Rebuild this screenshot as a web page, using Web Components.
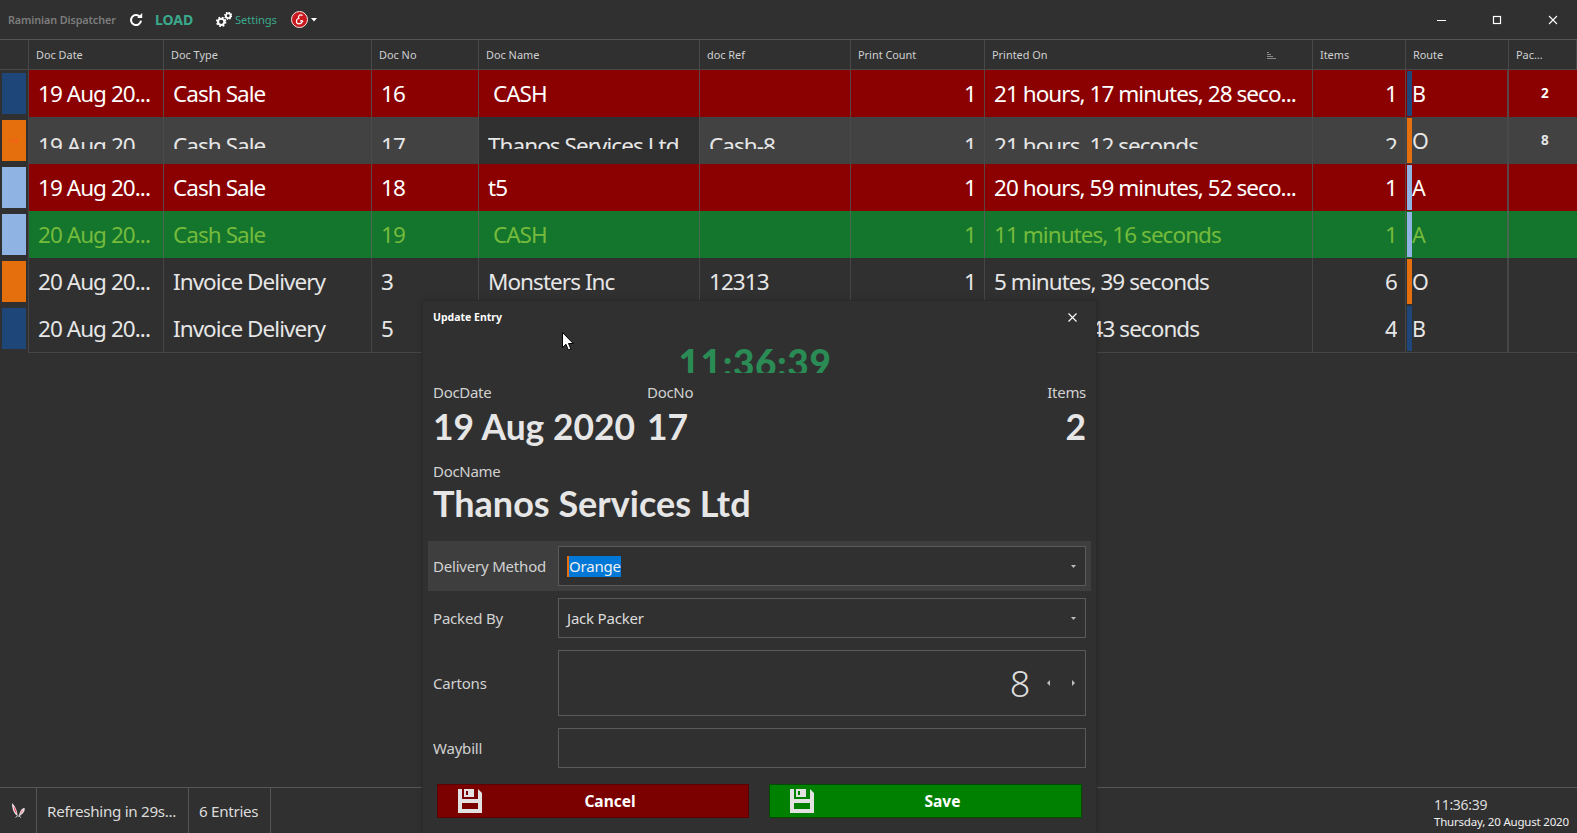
<!DOCTYPE html>
<html>
<head>
<meta charset="utf-8">
<title>Raminian Dispatcher</title>
<style>
  html, body { margin: 0; height: 100%; background: #303030; overflow: hidden; }
  body { font-family: "Noto Sans", "Liberation Sans", sans-serif; color: #e0e0e0; }
</style>
</head>
<body>
<rd-app>
  <rd-toolbar></rd-toolbar>
  <rd-grid>
    <rd-row kind="head">
      <rd-head></rd-head><rd-head>Doc Date</rd-head><rd-head>Doc Type</rd-head><rd-head>Doc No</rd-head><rd-head>Doc Name</rd-head><rd-head>doc Ref</rd-head><rd-head>Print Count</rd-head><rd-head sorted>Printed On</rd-head><rd-head>Items</rd-head><rd-head>Route</rd-head><rd-head>Pac...</rd-head>
    </rd-row>
    <rd-row kind="red">
      <rd-swatch color="#1f4678"></rd-swatch><rd-cell>19 Aug 20...</rd-cell><rd-cell>Cash Sale</rd-cell><rd-cell>16</rd-cell><rd-cell> CASH</rd-cell><rd-cell></rd-cell><rd-cell right>1</rd-cell><rd-cell>21 hours, 17 minutes, 28 seco...</rd-cell><rd-cell right>1</rd-cell><rd-route color="#1f4678">B</rd-route><rd-pack>2</rd-pack>
    </rd-row>
    <rd-row kind="current">
      <rd-swatch color="#e56f0c" arrow></rd-swatch><rd-cell clip>19 Aug 20...</rd-cell><rd-cell clip>Cash Sale</rd-cell><rd-cell clip>17</rd-cell><rd-cell clip focus>Thanos Services Ltd</rd-cell><rd-cell clip>Cash-8</rd-cell><rd-cell clip right>1</rd-cell><rd-cell clip>21 hours, 12 seconds</rd-cell><rd-cell clip right>2</rd-cell><rd-route color="#e56f0c">O</rd-route><rd-pack>8</rd-pack>
    </rd-row>
    <rd-row kind="red">
      <rd-swatch color="#8fb4e3"></rd-swatch><rd-cell>19 Aug 20...</rd-cell><rd-cell>Cash Sale</rd-cell><rd-cell>18</rd-cell><rd-cell>t5</rd-cell><rd-cell></rd-cell><rd-cell right>1</rd-cell><rd-cell>20 hours, 59 minutes, 52 seco...</rd-cell><rd-cell right>1</rd-cell><rd-route color="#8fb4e3">A</rd-route><rd-pack></rd-pack>
    </rd-row>
    <rd-row kind="green">
      <rd-swatch color="#8fb4e3"></rd-swatch><rd-cell>20 Aug 20...</rd-cell><rd-cell>Cash Sale</rd-cell><rd-cell>19</rd-cell><rd-cell> CASH</rd-cell><rd-cell></rd-cell><rd-cell right>1</rd-cell><rd-cell>11 minutes, 16 seconds</rd-cell><rd-cell right>1</rd-cell><rd-route color="#8fb4e3">A</rd-route><rd-pack></rd-pack>
    </rd-row>
    <rd-row>
      <rd-swatch color="#e56f0c"></rd-swatch><rd-cell>20 Aug 20...</rd-cell><rd-cell>Invoice Delivery</rd-cell><rd-cell>3</rd-cell><rd-cell>Monsters Inc</rd-cell><rd-cell>12313</rd-cell><rd-cell right>1</rd-cell><rd-cell>5 minutes, 39 seconds</rd-cell><rd-cell right>6</rd-cell><rd-route color="#e56f0c">O</rd-route><rd-pack></rd-pack>
    </rd-row>
    <rd-row>
      <rd-swatch color="#1f4678"></rd-swatch><rd-cell>20 Aug 20...</rd-cell><rd-cell>Invoice Delivery</rd-cell><rd-cell>5</rd-cell><rd-cell></rd-cell><rd-cell></rd-cell><rd-cell right></rd-cell><rd-cell>1 minute, 43 seconds</rd-cell><rd-cell right>4</rd-cell><rd-route color="#1f4678">B</rd-route><rd-pack></rd-pack>
    </rd-row>
  </rd-grid>
  <rd-statusbar></rd-statusbar>
  <rd-dialog heading="Update Entry" clock="11:36:39">
    <rd-info label="DocDate" value="19 Aug 2020" slot="date"></rd-info>
    <rd-info label="DocNo" value="17" slot="no"></rd-info>
    <rd-info label="Items" value="2" right slot="items"></rd-info>
    <rd-info label="DocName" value="Thanos Services Ltd" wide slot="name"></rd-info>
    <rd-field label="Delivery Method" active><rd-combo selected>Orange</rd-combo></rd-field>
    <rd-field label="Packed By"><rd-combo>Jack Packer</rd-combo></rd-field>
    <rd-field label="Cartons"><rd-spin>8</rd-spin></rd-field>
    <rd-field label="Waybill"><rd-text></rd-text></rd-field>
    <rd-button color="#7b0000" edge="#5c0000" slot="actions">Cancel</rd-button>
    <rd-button color="#008000" edge="#004d00" slot="actions">Save</rd-button>
  </rd-dialog>
  <rd-cursor></rd-cursor>
</rd-app>

<script>
const UI_FONT = '"Noto Sans", "Liberation Sans", sans-serif';
const CELL_FONT_SIZE = '22.5px';
const CELL_SPACING = '-0.95px';

class RdApp extends HTMLElement {
  constructor() {
    super();
    this.attachShadow({ mode: 'open' });
  }
  connectedCallback() {
    this.shadowRoot.innerHTML = `
      <style>
        :host {
          display: flex;
          flex-direction: column;
          position: relative;
          height: 833px;
          overflow: hidden;
          background: #303030;
          font-family: ${UI_FONT};
        }
      </style>
      <slot></slot>
    `;
  }
}

class RdToolbar extends HTMLElement {
  constructor() {
    super();
    this.attachShadow({ mode: 'open' });
  }
  connectedCallback() {
    this.shadowRoot.innerHTML = `
      <style>
        :host {
          display: flex;
          align-items: center;
          flex: none;
          height: 39px;
          border-bottom: 1px solid #555;
          box-sizing: content-box;
          padding-left: 8px;
        }
        .title { width: 121px; font-size: 10.8px; font-weight: 600; color: #7d7d7d; white-space: nowrap; letter-spacing: -.1px; }
        .refresh { width: 14px; height: 14px; margin-right: 12px; }
        .load { width: 61px; font-size: 14px; font-weight: 700; color: #3aa98c; }
        .gears { width: 16px; height: 15px; margin-right: 3px; }
        .settings { width: 56px; font-size: 11.2px; color: #3aa98c; letter-spacing: -.1px; }
        .logo { width: 17px; height: 17px; margin-right: 3px; }
        .caret { width: 6px; height: 4px; }
        .win { margin-left: auto; display: flex; }
        .win svg { width: 56px; height: 12px; display: block; }
      </style>
      <span class="title">Raminian Dispatcher</span>
      <svg class="refresh" viewBox="0 0 14 14" fill="none">
        <path d="M11.2 4.3A5 5 0 1 0 12 7.6" stroke="#fff" stroke-width="2"/>
        <path d="M8.2 4.9h5V0z" fill="#fff"/>
      </svg>
      <span class="load">LOAD</span>
      <svg class="gears" viewBox="0 0 17 16">
        <circle cx="5.5" cy="10.5" r="3.4" fill="none" stroke="#fff" stroke-width="2.2"/>
        <circle cx="5.5" cy="10.5" r="4.8" fill="none" stroke="#fff" stroke-width="1.6" stroke-dasharray="1.9 1.9"/>
        <circle cx="13" cy="4" r="2.5" fill="none" stroke="#fff" stroke-width="1.9"/>
        <circle cx="13" cy="4" r="3.7" fill="none" stroke="#fff" stroke-width="1.4" stroke-dasharray="1.5 1.4"/>
      </svg>
      <span class="settings">Settings</span>
      <svg class="logo" viewBox="0 0 17 17">
        <circle cx="8.5" cy="8.5" r="8" fill="#c9181e" stroke="#f4e8e8" stroke-width="1"/>
        <path d="M11.5 4.5C9.500 2.800 6.500 4.800 7.800 7.500 5 7.800 4.300 12.800 8 12.800c1.800 0 3-1 3.700-2.500-.4-1-1.700-1-2.400 0" fill="none" stroke="#fff" stroke-width="1.2"/>
      </svg>
      <svg class="caret" viewBox="0 0 6 4"><path d="M0 0h6L3 3.5z" fill="#fff"/></svg>
      <div class="win">
        <svg viewBox="0 0 56 12"><path d="M28 6.500h9" stroke="#fff" fill="none"/></svg>
        <svg viewBox="0 0 56 12"><rect x="28.500" y="2.500" width="7" height="7" stroke="#fff" fill="none" stroke-width="1.2"/></svg>
        <svg viewBox="0 0 56 12"><path d="M28 2l8 8M36 2l-8 8" stroke="#fff" fill="none" stroke-width="1.1"/></svg>
      </div>
    `;
  }
}

class RdGrid extends HTMLElement {
  constructor() {
    super();
    this.attachShadow({ mode: 'open' });
  }
  connectedCallback() {
    this.shadowRoot.innerHTML = `
      <style>
        :host {
          display: flex;
          flex-direction: column;
          flex: 1;
          min-height: 0;
          --cols: 29px 135px 208px 107px 221px 151px 134px 328px 93px 103px 68px;
        }
      </style>
      <slot></slot>
    `;
  }
}

class RdRow extends HTMLElement {
  constructor() {
    super();
    this.attachShadow({ mode: 'open' });
  }
  connectedCallback() {
    this.shadowRoot.innerHTML = `
      <style>
        :host {
          display: grid;
          grid-template-columns: var(--cols);
          height: 47px;
          color: #e6e6e6;
          background: #303030;
          --line: #464646;
        }
        :host([kind="head"]) { height: 30px; --line: #484848; }
        :host([kind="red"]) { background: #8b0000; color: #fff; --line: #5a4444; }
        :host([kind="green"]) { background: #14752d; color: #74bb3c; --line: #4b6650; }
        :host([kind="current"]) { background: #424242; color: #e6e6e6; --line: #4a4a4a; }
      </style>
      <slot></slot>
    `;
  }
}

class RdHead extends HTMLElement {
  constructor() {
    super();
    this.attachShadow({ mode: 'open' });
  }
  connectedCallback() {
    const sort = this.hasAttribute('sorted')
      ? `<svg viewBox="0 0 9 7"><path d="M0 .5h2M0 2.500h4M0 4.500h6M0 6.500h9" stroke="#8a8a8a"/></svg>`
      : '';
    this.shadowRoot.innerHTML = `
      <style>
        :host {
          display: flex;
          align-items: center;
          position: relative;
          box-sizing: border-box;
          padding-left: 7px;
          font-size: 10.9px;
          color: #d0d0d0;
          border-right: 1px solid var(--line);
          border-bottom: 1px solid var(--line);
          white-space: nowrap;
        }
        svg { position: absolute; left: 282px; top: 12px; width: 9px; height: 7px; }
      </style>
      <slot></slot>${sort}
    `;
  }
}

class RdCell extends HTMLElement {
  constructor() {
    super();
    this.attachShadow({ mode: 'open' });
  }
  connectedCallback() {
    this.shadowRoot.innerHTML = `
      <style>
        :host {
          display: block;
          box-sizing: border-box;
          min-width: 0;
          padding: 0 8px 0 9px;
          border-right: 1px solid var(--line);
          border-bottom: 1px solid var(--line);
          font-size: ${CELL_FONT_SIZE};
          letter-spacing: ${CELL_SPACING};
          line-height: 48px;
          overflow: hidden;
        }
        :host([right]) { text-align: right; }
        :host([focus]) { background: #303030; }
        /* the row is mid-repaint in the reference: text sits low and is cut */
        :host([clip]) .text { height: 32px; line-height: 58px; }
        .text { display: block; overflow: hidden; white-space: pre; }
      </style>
      <span class="text"><slot></slot></span>
    `;
  }
}

class RdSwatch extends HTMLElement {
  constructor() {
    super();
    this.attachShadow({ mode: 'open' });
  }
  connectedCallback() {
    const arrow = this.hasAttribute('arrow')
      ? `<svg viewBox="0 0 10 8"><path d="M0 4h9M6 1l3 3-3 3" fill="none" stroke="#ff5a1e"/></svg>`
      : '';
    this.shadowRoot.innerHTML = `
      <style>
        :host {
          display: flex;
          align-items: center;
          justify-content: center;
          box-sizing: border-box;
          background: #303030;
          border-right: 1px solid #464646;
          padding: 3px 2px 4px 2px;
        }
        div { width: 100%; height: 100%; display: flex; align-items: center; justify-content: center; background: ${this.getAttribute('color')}; }
        svg { width: 10px; height: 8px; }
      </style>
      <div>${arrow}</div>
    `;
  }
}

class RdRoute extends HTMLElement {
  constructor() {
    super();
    this.attachShadow({ mode: 'open' });
  }
  connectedCallback() {
    this.shadowRoot.innerHTML = `
      <style>
        :host {
          display: flex;
          box-sizing: border-box;
          border-right: 2px solid var(--line);
          border-bottom: 1px solid var(--line);
          padding: 1px 0 1px 1px;
          font-size: 21.5px;
          line-height: 45px;
        }
        i { display: block; width: 5px; background: ${this.getAttribute('color')}; }
      </style>
      <i></i><slot></slot>
    `;
  }
}

class RdPack extends HTMLElement {
  constructor() {
    super();
    this.attachShadow({ mode: 'open' });
  }
  connectedCallback() {
    this.shadowRoot.innerHTML = `
      <style>
        :host {
          display: block;
          box-sizing: border-box;
          border-bottom: 1px solid var(--line);
          padding-left: 32px;
          font-size: 13.5px;
          font-weight: 700;
          line-height: 47px;
        }
      </style>
      <slot></slot>
    `;
  }
}

class RdStatusbar extends HTMLElement {
  constructor() {
    super();
    this.attachShadow({ mode: 'open' });
  }
  connectedCallback() {
    this.shadowRoot.innerHTML = `
      <style>
        :host {
          display: flex;
          flex: none;
          height: 45px;
          border-top: 1px solid #555;
          font-size: 15.2px;
          color: #dcdcdc;
          letter-spacing: -.3px;
        }
        .cell { display: flex; align-items: center; box-sizing: border-box; border-right: 1px solid #555; white-space: nowrap; }
        .bunny { width: 37px; justify-content: center; }
        .bunny svg { width: 16px; height: 17px; }
        .refresh { width: 152px; padding-left: 10px; }
        .entries { width: 82px; padding-left: 10px; }
        .clock { margin-left: auto; width: 143px; display: flex; flex-direction: column; padding-top: 9px; }
        .time { font-size: 14px; line-height: 16px; }
        .date { font-size: 11.5px; line-height: 17px; letter-spacing: -.2px; white-space: nowrap; color: #f0f0f0; }
      </style>
      <div class="cell bunny">
        <svg viewBox="0 0 16 17" fill="none">
          <path d="M2 1c3 3 5.500 8 5.500 13-3.500-2-5.500-7-5.500-13z" fill="#f3e9ea"/>
          <path d="M3.500 4c1.500 2.300 2.800 5 3.200 8-1.800-2-3-5-3.200-8z" fill="#e8405f"/>
          <path d="M14.500 6c1 3-2 6.500-5.500 8.200.3-3.400 2-7.800 5.500-8.200z" fill="#f3e9ea"/>
          <path d="M13.300 7.500c.4 2-1.500 4.200-3.400 5.300.4-2.200 1.600-4.600 3.400-5.300z" fill="#e79aa8"/>
          <path d="M5.500 15.500l2-1.500 1.500 0 2 1.500" stroke="#c9c9c9" stroke-width="1"/>
        </svg>
      </div>
      <div class="cell refresh">Refreshing in 29s...</div>
      <div class="cell entries">6 Entries</div>
      <div class="clock">
        <span class="time">11:36:39</span>
        <span class="date">Thursday, 20 August 2020</span>
      </div>
    `;
  }
}

class RdDialog extends HTMLElement {
  constructor() {
    super();
    this.attachShadow({ mode: 'open' });
  }
  connectedCallback() {
    this.shadowRoot.innerHTML = `
      <style>
        :host {
          display: flex;
          flex-direction: column;
          position: absolute;
          left: 423px;
          top: 301px;
          width: 673px;
          height: 532px;
          box-sizing: border-box;
          padding: 0 10px;
          background: #303030;
          box-shadow: 0 0 0 1px #2a2a2a, 0 0 6px rgba(0, 0, 0, .25);
        }
        .title { display: flex; align-items: center; justify-content: space-between; height: 32px; flex: none; font-size: 10.5px; font-weight: 700; color: #fff; }
        .title svg { width: 9px; height: 9px; margin-right: 9px; }
        .clock { height: 40px; flex: none; overflow: hidden; text-align: center; padding-right: 9px; box-sizing: border-box; font-family: Lato, "Liberation Sans", sans-serif; font-size: 37px; font-weight: 900; line-height: 60px; letter-spacing: .6px; color: #2a8b55; }
        .info { display: grid; grid-template-columns: 214px 1fr auto; margin-top: 9px; flex: none; }
        .name { margin-top: 14px; }
        .form { display: flex; flex-direction: column; gap: 2px; margin: 18px -5px 0; flex: none; }
        .actions { display: grid; grid-template-columns: 312px 313px; gap: 20px; margin: 11px 0 0 4px; flex: none; }
      </style>
      <div class="title">
        <span>${this.getAttribute('heading')}</span>
        <svg viewBox="0 0 9 9"><path d="M.5.500l8 8M8.500.500l-8 8" stroke="#fff" fill="none" stroke-width="1.1"/></svg>
      </div>
      <div class="clock">${this.getAttribute('clock')}</div>
      <div class="info">
        <slot name="date"></slot><slot name="no"></slot><slot name="items"></slot>
      </div>
      <div class="name"><slot name="name"></slot></div>
      <div class="form"><slot></slot></div>
      <div class="actions"><slot name="actions"></slot></div>
    `;
  }
}

class RdInfo extends HTMLElement {
  constructor() {
    super();
    this.attachShadow({ mode: 'open' });
  }
  connectedCallback() {
    this.shadowRoot.innerHTML = `
      <style>
        :host { display: block; }
        :host([right]) { text-align: right; }
        .label { display: block; font-size: 15px; line-height: 20px; letter-spacing: -.3px; color: #d2d2d2; }
        .value { display: block; margin-top: 5px; font-family: Lato, "Liberation Sans", sans-serif; font-size: 35.4px; font-weight: 700; line-height: 40px; color: #e6e6e6; white-space: nowrap; }
        :host([wide]) .value { font-size: 36px; margin-top: 2px; }
      </style>
      <span class="label">${this.getAttribute('label')}</span>
      <span class="value">${this.getAttribute('value')}</span>
    `;
  }
}

class RdField extends HTMLElement {
  constructor() {
    super();
    this.attachShadow({ mode: 'open' });
  }
  connectedCallback() {
    this.shadowRoot.innerHTML = `
      <style>
        :host {
          display: grid;
          grid-template-columns: 125px 1fr;
          align-items: center;
          padding: 5px;
          font-size: 15px;
          letter-spacing: -.2px;
          color: #d2d2d2;
        }
        :host([active]) { background: #3e3e3e; }
      </style>
      <span>${this.getAttribute('label')}</span>
      <slot></slot>
    `;
  }
}

const boxStyle = `
  display: flex;
  align-items: center;
  box-sizing: border-box;
  height: 40px;
  padding: 0 9px 0 8px;
  background: #303030;
  border: 1px solid #5a5a5a;
  color: #dcdcdc;
`;

class RdCombo extends HTMLElement {
  constructor() {
    super();
    this.attachShadow({ mode: 'open' });
  }
  connectedCallback() {
    this.shadowRoot.innerHTML = `
      <style>
        :host { ${boxStyle} justify-content: space-between; }
        .sel { display: flex; line-height: 21px; }
        :host([selected]) .sel { background: #0078d7; color: #f0f0f0; border-left: 2px solid #e56f0c; }
        svg { width: 5px; height: 3px; }
      </style>
      <span class="sel"><slot></slot></span>
      <svg viewBox="0 0 5 3"><path d="M0 0h5L2.5 3z" fill="#bdbdbd"/></svg>
    `;
  }
}

class RdSpin extends HTMLElement {
  constructor() {
    super();
    this.attachShadow({ mode: 'open' });
  }
  connectedCallback() {
    this.shadowRoot.innerHTML = `
      <style>
        :host { ${boxStyle} height: 66px; justify-content: flex-end; font-size: 36px; font-weight: 300; }
        svg { width: 3px; height: 6px; }
        .down { margin-left: 17px; }
        .up { margin: 0 1px 0 22px; }
      </style>
      <slot></slot>
      <svg class="down" viewBox="0 0 3 6"><path d="M3 0v6L0 3z" fill="#bdbdbd"/></svg>
      <svg class="up" viewBox="0 0 3 6"><path d="M0 0v6l3-3z" fill="#bdbdbd"/></svg>
    `;
  }
}

class RdText extends HTMLElement {
  constructor() {
    super();
    this.attachShadow({ mode: 'open' });
  }
  connectedCallback() {
    this.shadowRoot.innerHTML = `
      <style>:host { ${boxStyle} }</style>
      <slot></slot>
    `;
  }
}

class RdButton extends HTMLElement {
  constructor() {
    super();
    this.attachShadow({ mode: 'open' });
  }
  connectedCallback() {
    this.shadowRoot.innerHTML = `
      <style>
        :host {
          display: flex;
          align-items: center;
          box-sizing: border-box;
          height: 34px;
          padding: 0 10px 0 20px;
          background: ${this.getAttribute('color')};
          border: 1px solid ${this.getAttribute('edge')};
          font-size: 15.5px;
          font-weight: 700;
          color: #fff;
        }
        svg { width: 24px; height: 24px; flex: none; }
        span { flex: 1; text-align: center; }
      </style>
      <svg viewBox="0 0 24 24">
        <path fill="#e2e2e2" fill-rule="evenodd" d="M0 0h20l4 4v20H0zM4 0v10h16V0zM4 14v6h16v-6z"/>
        <path fill="#e2e2e2" fill-rule="evenodd" d="M6 0h10v8H6zM8 2v4h2V2z"/>
      </svg>
      <span><slot></slot></span>
    `;
  }
}

class RdCursor extends HTMLElement {
  constructor() {
    super();
    this.attachShadow({ mode: 'open' });
  }
  connectedCallback() {
    this.shadowRoot.innerHTML = `
      <style>
        :host { display: block; position: absolute; left: 562px; top: 332px; width: 12px; height: 19px; }
        svg { display: block; width: 12px; height: 19px; }
      </style>
      <svg viewBox="0 0 12 19">
        <path d="M.5.500v15l3.500-3.200 2.300 5.700 2.600-1-2.400-5.500h4.700z" fill="#fff" stroke="#000"/>
      </svg>
    `;
  }
}

customElements.define('rd-app', RdApp);
customElements.define('rd-toolbar', RdToolbar);
customElements.define('rd-grid', RdGrid);
customElements.define('rd-row', RdRow);
customElements.define('rd-head', RdHead);
customElements.define('rd-cell', RdCell);
customElements.define('rd-swatch', RdSwatch);
customElements.define('rd-route', RdRoute);
customElements.define('rd-pack', RdPack);
customElements.define('rd-statusbar', RdStatusbar);
customElements.define('rd-dialog', RdDialog);
customElements.define('rd-info', RdInfo);
customElements.define('rd-field', RdField);
customElements.define('rd-combo', RdCombo);
customElements.define('rd-spin', RdSpin);
customElements.define('rd-text', RdText);
customElements.define('rd-button', RdButton);
customElements.define('rd-cursor', RdCursor);
</script>
</body>
</html>
